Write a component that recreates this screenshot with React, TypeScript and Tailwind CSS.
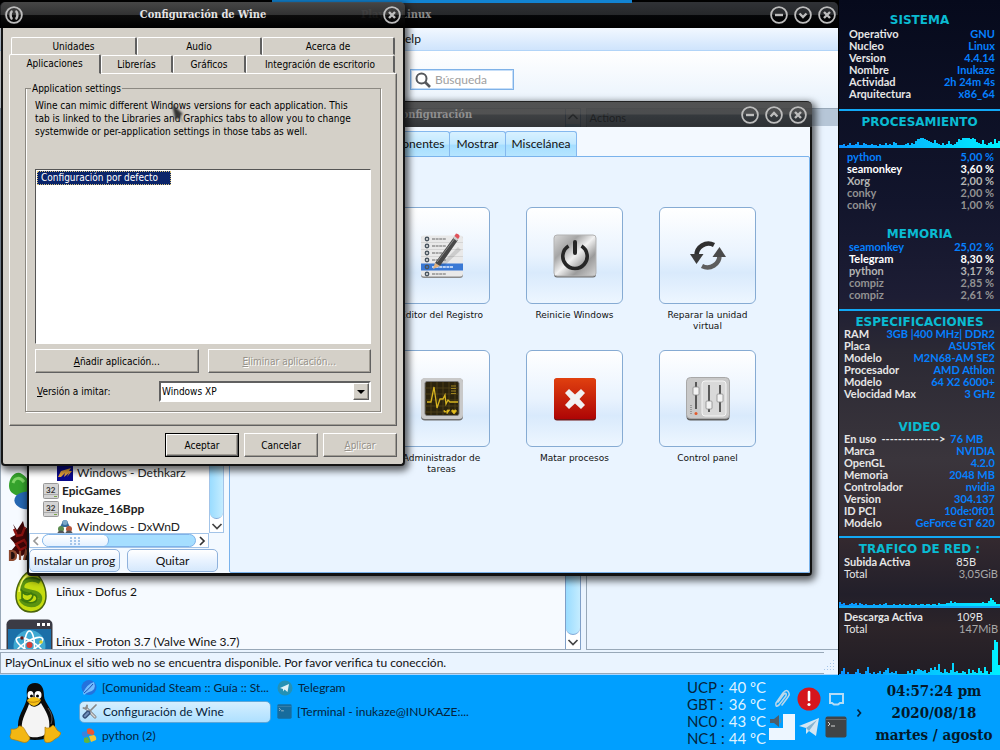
import React, { useState } from 'react';

type Row = { label: string; value: string; tone?: string; valueTone?: string };

const WHITE = 'text-[#e6e6e6]';
const BLUE = 'text-[#0580ff]';
const GREY = 'text-[#929292]';

const SYSTEM: Row[] = [
  { label: 'Operativo', value: 'GNU' },
  { label: 'Nucleo', value: 'Linux' },
  { label: 'Version', value: '4.4.14' },
  { label: 'Nombre', value: 'Inukaze' },
  { label: 'Actividad', value: '2h 24m 4s' },
  { label: 'Arquitectura', value: 'x86_64' },
];

const CPU: Row[] = [
  { label: 'python', value: '5,00 %', tone: BLUE, valueTone: BLUE },
  { label: 'seamonkey', value: '3,60 %', tone: 'text-white', valueTone: 'text-white' },
  { label: 'Xorg', value: '2,00 %', tone: 'text-[#b4b4b4]', valueTone: 'text-[#b4b4b4]' },
  { label: 'conky', value: '2,00 %', tone: GREY, valueTone: GREY },
  { label: 'conky', value: '1,00 %', tone: GREY, valueTone: GREY },
];

const MEMORY: Row[] = [
  { label: 'seamonkey', value: '25,02 %', tone: BLUE, valueTone: BLUE },
  { label: 'Telegram', value: '8,30 %', tone: 'text-white', valueTone: 'text-white' },
  { label: 'python', value: '3,17 %', tone: 'text-[#b4b4b4]', valueTone: 'text-[#b4b4b4]' },
  { label: 'compiz', value: '2,85 %', tone: GREY, valueTone: GREY },
  { label: 'compiz', value: '2,61 %', tone: GREY, valueTone: GREY },
];

const SPECS: Row[] = [
  { label: 'RAM', value: '3GB |400 MHz| DDR2' },
  { label: 'Placa', value: 'ASUSTeK' },
  { label: 'Modelo', value: 'M2N68-AM SE2' },
  { label: 'Procesador', value: 'AMD Athlon' },
  { label: 'Modelo', value: '64 X2 6000+' },
  { label: 'Velocidad Max', value: '3 GHz' },
];

const VIDEO: Row[] = [
  { label: 'Marca', value: 'NVIDIA' },
  { label: 'OpenGL', value: '4.2.0' },
  { label: 'Memoria', value: '2048 MB' },
  { label: 'Controlador', value: 'nvidia' },
  { label: 'Version', value: '304.137' },
  { label: 'ID PCI', value: '10de:0f01' },
  { label: 'Modelo', value: 'GeForce GT 620' },
];

const CPU_LOAD = [3, 3, 4, 2, 3, 5, 3, 3, 4, 6, 3, 3, 5, 4, 3, 3, 4, 3, 3, 2, 4, 3, 3, 5, 3, 4, 3, 6, 5, 3, 3, 3, 3, 4, 5, 3, 5, 4, 7, 9, 10, 10, 9, 8, 7, 6, 5, 8, 5, 4, 3, 5, 3, 4, 7, 4, 3, 4, 6, 9, 8, 10, 10, 10, 10, 9, 10, 9, 6, 5, 4, 8, 4, 3, 5, 6, 4, 9, 5, 7];
const UPLOAD = [4, 2, 3, 1, 1, 2, 3, 2, 3, 1, 3, 2, 1, 2, 1, 1, 1, 2, 1, 1, 2, 1, 2, 3, 1, 1, 1, 2, 1, 1, 2, 1, 2, 1, 1, 2, 1, 1, 2, 1, 2, 2, 1, 2, 2, 1, 2, 2, 1, 3, 2, 2, 2, 3, 3, 5, 3, 4, 3, 3, 3, 3, 3, 3, 3, 3, 3, 3, 3, 3, 3, 4, 3, 3, 5, 8, 6, 4, 2, 2];
const DOWNLOAD = [1, 4, 7, 1, 3, 1, 1, 1, 3, 6, 2, 1, 1, 4, 8, 2, 1, 3, 1, 2, 4, 1, 3, 5, 7, 2, 3, 2, 4, 1, 1, 1, 1, 1, 4, 2, 5, 1, 4, 6, 5, 4, 5, 2, 3, 7, 5, 8, 5, 11, 3, 2, 6, 3, 2, 5, 12, 3, 4, 2, 2, 4, 3, 1, 6, 2, 5, 3, 2, 7, 4, 2, 8, 4, 1, 3, 25, 35, 33, 10];

const TEMPS = [
  ['UCP', '40'],
  ['GBT', '36'],
  ['NC0', '43'],
  ['NC1', '44'],
];

/* ---------- desktop monitor ---------- */

const Heading = ({ children }: { children: React.ReactNode }) => (
  <h2 className="text-center font-['DejaVu_Sans',sans-serif] text-[12px] leading-[14px] font-bold text-[#0abbd2]">{children}</h2>
);

const Rows = ({ rows }: { rows: Row[] }) => (
  <dl>
    {rows.map((r, i) => (
      <div key={i} className="flex justify-between">
        <dt className={r.tone ?? WHITE}>{r.label}</dt>
        <dd className={r.valueTone ?? BLUE}>{r.value}</dd>
      </div>
    ))}
  </dl>
);

const Rule = () => <div className="h-[2px] bg-[#12a8f5]" />;

const Graph = ({ id, data, max, className }: { id: string; data: number[]; max: number; className: string }) => (
  <svg className={className} viewBox={`0 0 ${data.length * 2} ${max}`} preserveAspectRatio="none" shapeRendering="crispEdges">
    <defs>
      <linearGradient id={id} x1="0" x2={data.length * 2} y1="0" y2="0" gradientUnits="userSpaceOnUse">
        <stop offset="0" stopColor="#0a90ff" />
        <stop offset="1" stopColor="#00f0ff" />
      </linearGradient>
    </defs>
    {data.map((v, i) => (
      <rect key={i} x={i * 2} y={max - v} width={2} height={v} fill={`url(#${id})`} />
    ))}
  </svg>
);

const Monitor = () => (
  <aside className="flex w-[161px] shrink-0 flex-col bg-[linear-gradient(#060a1c,#12152c_30%,#1d1d34_44%,#2b2934_52%,#3a353c_68%,#33292f_80%,#221f2a_88%,#2c2429_93%,#211d25)] pt-[13px] text-[11px] leading-[12px] font-bold">
    <Heading>SISTEMA</Heading>
    <div className="pt-px pr-[5px] pl-[10px]"><Rows rows={SYSTEM} /></div>
    <div className="pt-[9px] pb-[4px]"><Rule /></div>
    <Heading>PROCESAMIENTO</Heading>
    <Graph id="cpu" data={CPU_LOAD} max={10} className="mt-[9px] block h-[10px] w-full" />
    <div className="pt-[3px] pr-[6px] pl-[8px]"><Rows rows={CPU} /></div>
    <div className="pt-[16px]"><Heading>MEMORIA</Heading></div>
    <div className="pr-[6px] pl-[10px]"><Rows rows={MEMORY} /></div>
    <div className="pt-[8px] pb-[4px]"><Rule /></div>
    <Heading>ESPECIFICACIONES</Heading>
    <div className="-mt-px pr-[5px] pl-[5px]"><Rows rows={SPECS} /></div>
    <div className="pt-[20px]"><Heading>VIDEO</Heading></div>
    <div className="-mt-px pr-[5px] pl-[5px]">
      <p className="flex gap-[5px]">
        <span className={WHITE}>En uso</span>
        <span className={WHITE}>--------------&gt;</span>
        <span className={BLUE}>76 MB</span>
      </p>
      <Rows rows={VIDEO} />
    </div>
    <div className="pt-[7px] pb-[4px]"><Rule /></div>
    <Heading>TRAFICO DE RED :</Heading>
    <div className="pr-[2px] pl-[5px]">
      <p className={`flex justify-between pr-[22px] ${WHITE}`}><span>Subida Activa</span><span className="font-normal">85B</span></p>
      <p className="flex justify-between font-normal text-[#a8a8a8]"><span className={WHITE}>Total</span><span>3,05GiB</span></p>
    </div>
    <Graph id="up" data={UPLOAD} max={8} className="mt-[18px] block h-[8px] w-full" />
    <Rule />
    <div className="pt-[3px] pr-[2px] pl-[5px]">
      <p className={`flex justify-between pr-[15px] ${WHITE}`}><span>Descarga Activa</span><span className="font-normal">109B</span></p>
      <p className="flex justify-between font-normal text-[#a8a8a8]"><span className={WHITE}>Total</span><span>147MiB</span></p>
    </div>
    <Graph id="down" data={DOWNLOAD} max={35} className="mt-auto block h-[35px] w-full" />
  </aside>
);

/* ---------- window chrome ---------- */

const SHAPES: Record<string, string> = {
  min: 'M5 9H13',
  down: 'M5.5 7.5L9 11L12.5 7.5',
  up: 'M5.5 10.5L9 7L12.5 10.5',
  close: 'M6 6L12 12M12 6L6 12',
  menu: 'M7.5 5C5 6 5 12 7.5 13M10.5 5C13 6 13 12 10.5 13',
};

const RoundButton = ({ shape, label }: { shape: keyof typeof SHAPES; label: string }) => (
  <button aria-label={label} className="size-[18px] shrink-0 text-[#bdbdbd]">
    <svg viewBox="0 0 18 18" className="size-full" fill="none" stroke="currentColor">
      <circle cx="9" cy="9" r="7.9" strokeWidth="1.8" />
      <path d={SHAPES[shape]} strokeWidth="2.4" />
    </svg>
  </button>
);

const TitleBar = ({ title, className, children }: { title: string; className: string; children: React.ReactNode }) => (
  <header className={`flex h-[26px] items-center gap-[6px] rounded-t-[5px] px-[4px] ${className}`}>
    <RoundButton shape="menu" label="Menú" />
    <h1 className="flex-1 text-center font-['DejaVu_Serif_Condensed','DejaVu_Serif',serif] text-[11px] leading-[16px] font-bold whitespace-nowrap">{title}</h1>
    {children}
  </header>
);

const Chevron = ({ d, className = 'size-[12px]' }: { d: string; className?: string }) => (
  <svg viewBox="0 0 12 12" className={className} fill="none" stroke="currentColor" strokeWidth="1.7"><path d={d} /></svg>
);

/* ---------- list icons ---------- */

const CloverIcon = () => (
  <svg viewBox="0 0 44 44" className="size-[44px]">
    <path d="M23 25C12 28 1 25 1 16C1 7 8 0 14 4C21 8 23 16 23 25Z" fill="#35a22c" />
    <path d="M5 13C7 7 12 7 16 12" stroke="#7fd567" strokeWidth="3" fill="none" />
    <path d="M25 22C13 20 4 26 7 33C10 39 21 42 26 36Z" fill="#2567b1" />
  </svg>
);

const DemonIcon = () => (
  <svg viewBox="0 0 44 44" className="size-[44px]">
    <path d="M5 4L9 10L15 1L17 9L24 4L22 30L14 36L3 31L8 25L2 18L9 14Z" fill="#3d0708" />
    <path d="M6 9L9 16L14 15L17 7M8 24L16 20L20 26L12 30Z" stroke="#8d1310" strokeWidth="2.4" fill="none" />
    <path d="M2 31V40H5C9 39 9 32 5 31ZM12 31V40M16 40L18 31L22 40" stroke="#8d4a30" strokeWidth="2.2" fill="#23100d" />
  </svg>
);

const DofusIcon = () => (
  <svg viewBox="0 0 44 44" className="size-[44px]">
    <path d="M22 1C31 3 37 16 37 26C37 35 31 42 22 42S7 35 7 26C7 16 13 3 22 1Z" fill="#c5dc10" stroke="#4a640c" strokeWidth="1.5" />
    <path d="M31 12C24 7 13 10 13 17C13 24 32 19 31 29C30 37 15 37 12 29" fill="none" stroke="#5b9310" strokeWidth="4.500" />
    <path d="M31 10C23 5 11 9 11 17C11 26 29 21 28 29C27 34 17 34 12 29M22 23C19 26 16 25 13 22V28C17 33 23 31 24 25Z" fill="none" stroke="#3c780c" strokeWidth="1.6" />
    <path d="M10 22C11 12 16 6 21 4" fill="none" stroke="#f4f871" strokeWidth="1.600" />
  </svg>
);

const ProtonIcon = () => (
  <svg viewBox="0 0 47 47" className="h-[47px] w-[47px]">
    <rect x=".5" y=".5" width="46" height="46" rx="5" fill="#3b3b45" />
    <path d="M31 4h3v3h-3zM36 4h3v3h-3zM41 4h3v3h-3z" fill="#fff" />
    <path d="M2 10H45V45H2Z" fill="#1b6fa8" />
    <circle cx="23.500" cy="27" r="16" fill="#3fa9d2" />
    <g fill="none" stroke="#fff" strokeWidth="1.6">
      <ellipse cx="23.5" cy="27" rx="5" ry="15" />
      <ellipse cx="23.5" cy="27" rx="5" ry="15" transform="rotate(60 23.5 27)" />
      <ellipse cx="23.5" cy="27" rx="5" ry="15" transform="rotate(120 23.5 27)" />
    </g>
    <circle cx="23.500" cy="26" r="3" fill="#dc3b35" />
    <circle cx="16" cy="19" r="1.8" fill="#5e1717" />
    <circle cx="35" cy="23" r="1.800" fill="#d5cf2e" />
  </svg>
);

const DriveIcon = () => (
  <svg viewBox="0 0 16 16" className="size-[16px] shrink-0">
    <rect x=".5" y=".5" width="15" height="15" rx="1" fill="#d4d4d4" stroke="#999" />
    <path d="M1 11.500H15" stroke="#aaa" />
    <path d="M11 13.500h3" stroke="#7aa64b" />
    <text x="3" y="9.500" fontSize="8" fontFamily="Lato" fontWeight="bold" fill="#333">32</text>
  </svg>
);

const DethIcon = () => (
  <svg viewBox="0 0 16 16" className="size-[16px] shrink-0">
    <path d="M0 0H16V16H0Z" fill="#0a0a8c" />
    <path d="M1 12L4 6L14 3L12 6L15 6L10 12L12 8L7 12L8 8L4 12Z" fill="#e9a53b" />
  </svg>
);

const CubesIcon = () => (
  <svg viewBox="0 0 16 16" className="size-[16px] shrink-0">
    <path d="M5 4C5 0 11 0 11 4L13 8H3Z" fill="#386c9b" />
    <circle cx="8" cy="3.500" r="2.500" fill="#7aa8c9" />
    <circle cx="4" cy="10" r="3" fill="#5b8c4e" />
    <circle cx="12" cy="10" r="3" fill="#b4563c" />
    <path d="M0 16C0 10 8 10 8 16ZM8 16C8 10 16 10 16 16Z" fill="#555" />
  </svg>
);

/* ---------- tile icons ---------- */

const RegistryIcon = () => (
  <svg viewBox="0 0 44 46" className="h-[46px] w-[44px]">
    <rect x="1" y="3" width="42" height="42" rx="3" fill="#8b8b8b" />
    <rect x="1" y="2.500" width="42" height="41" rx="3" fill="#e9e9e9" />
    <path d="M1 30.500H43V37.500H1Z" fill="#3a79d5" />
    <path d="M1 9.500H43M1 16.500H43M1 23.500H43" stroke="#cfcfcf" strokeWidth=".8" />
    {[6, 13, 20, 27, 34, 41].map((y) => (
      <g key={y}>
        <circle cx="7" cy={y} r="1.700" fill="none" stroke="#4a5660" strokeWidth="1.4" />
        <path d={`M12 ${y}H${y === 34 ? 33 : 26}`} stroke={y === 34 ? '#b9d1f4' : '#a7a7a7'} strokeWidth="1.8" strokeDasharray="3 .6" />
      </g>
    ))}
    <path d="M20 32L38 14L41 17L24 33Z" fill="#000" opacity=".12" />
    <path d="M15 30L34 4L38 7L20 33Z" fill="#484848" />
    <path d="M17 29L35 5" stroke="#8b8b8b" strokeWidth="1" />
    <path d="M15 30L20 33L13 36Z" fill="#e3b27c" />
    <path d="M33 5L35 2L39 5L37 8Z" fill="#cfcfcf" />
    <path d="M34.500 3L36 0.500Q40 1 39.500 4L38 6Z" fill="#e0525a" />
  </svg>
);

const PowerIcon = () => (
  <svg viewBox="0 0 44 44" className="size-[44px]">
    <defs>
      <linearGradient id="metal" x1="0" y1="0" x2="1" y2="1">
        <stop offset="0" stopColor="#d9d9d9" /><stop offset=".3" stopColor="#a5a5a5" /><stop offset=".5" stopColor="#f1f1f1" />
        <stop offset=".72" stopColor="#9b9b9b" /><stop offset="1" stopColor="#d5d5d5" />
      </linearGradient>
    </defs>
    <rect x="1" y="1.500" width="42" height="42" rx="3" fill="#6d6d6d" />
    <rect x="1" y="1" width="42" height="41" rx="3" fill="url(#metal)" stroke="#b3b3b3" />
    <path d="M15.500 12A12.200 12.200 0 1 0 28.500 12" fill="none" stroke="#262626" strokeWidth="3.600" />
    <path d="M22 8V19" stroke="#262626" strokeWidth="4" strokeLinecap="round" />
  </svg>
);

const RefreshIcon = () => (
  <svg viewBox="0 0 44 44" className="size-[44px]">
    <path d="M10.500 22A12 12 0 0 1 28 11" fill="none" stroke="#303030" strokeWidth="4.500" />
    <path d="M33.500 21A12 12 0 0 1 16 32" fill="none" stroke="#5e5e5e" strokeWidth="4.500" />
    <path d="M4 20H17.500L10.500 30Z" fill="#3c3c3c" />
    <path d="M26.500 23H40L33.500 13Z" fill="#4a4a4a" />
  </svg>
);

const PulseIcon = () => (
  <svg viewBox="0 0 44 44" className="size-[44px]">
    <rect x="1" y="1.500" width="42" height="42" rx="4" fill="#6f6f6f" />
    <rect x="1" y="1" width="42" height="41" rx="4" fill="#c9c9c9" />
    <rect x="5" y="4.500" width="34" height="34" rx="2" fill="#2b230d" stroke="#777" />
    <path d="M11 5V38M17 5V38M23 5V38M29 5V38M35 5V38M5 11H39M5 17H39M5 23H39M5 29H39M5 35H39" stroke="#57491b" strokeWidth=".7" />
    <path d="M7 25H11L14 10L17 31L20 22H23L25 18L26 27L28 23L30 25H38" fill="none" stroke="#d8b520" strokeWidth="1.300" />
    <path d="M31 9H36M31 11.500H36M31 14H36M31 16.500H36" stroke="#9f8420" strokeWidth="1.200" />
    <path d="M24 33V35H27M30 33H27V37M34 37L31.500 34Q32 32 34 33.500Q36 32 36.500 34Z" stroke="#d4b020" fill="#e8c21d" strokeWidth=".8" />
  </svg>
);

const KillIcon = () => (
  <svg viewBox="0 0 44 44" className="size-[44px]">
    <defs><linearGradient id="red" x1="0" y1="0" x2="0" y2="1"><stop offset="0" stopColor="#e0400f" /><stop offset="1" stopColor="#ae0505" /></linearGradient></defs>
    <rect x="1" y="1.500" width="42" height="42" rx="3" fill="#701515" />
    <rect x="1" y="1" width="42" height="41" rx="3" fill="url(#red)" />
    <path d="M12 16L16 12L22 17.500L28 12L32 16L26.500 22L32 28L28 32L22 26.500L16 32L12 28L17.500 22Z" fill="#f1f1f1" />
  </svg>
);

const MixerIcon = () => (
  <svg viewBox="0 0 44 44" className="size-[44px]">
    <rect x=".5" y="1.500" width="43" height="42" rx="4" fill="#5f5f5f" />
    <rect x=".5" y=".5" width="43" height="41" rx="4" fill="#c9c9c9" stroke="#a8a8a8" />
    <rect x="16" y="4" width="24" height="35" rx="3" fill="#d9d9d9" stroke="#f5f5f5" />
    <path d="M10 5V32M23 8V35M34 8V35" stroke="#3b3b3b" strokeWidth="1.600" />
    <g fill="#f2f2f2" stroke="#8a8a8a" strokeWidth=".8">
      <rect x="7" y="10" width="6" height="8" rx="1" />
      <rect x="20" y="24" width="6" height="8" rx="1" />
      <rect x="31" y="17" width="6" height="8" rx="1" />
    </g>
    <path d="M5 37V28" stroke="#999" strokeDasharray="1 1" strokeWidth="2" />
    <circle cx="10" cy="36.500" r="1.500" fill="#e25a2c" />
  </svg>
);

/* ---------- PlayOnLinux main window ---------- */

const MainWindow = () => (
  <section className="flex min-w-0 flex-1 flex-col bg-black pt-[2px] pr-px">
    <TitleBar title="PlayOnLinux" className="bg-[linear-gradient(#303236,#26282b_48%,#050608_52%,#000)] pr-[2px] text-[#8b8b8b]">
      <RoundButton shape="min" label="Minimizar" />
      <RoundButton shape="down" label="Restaurar" />
      <RoundButton shape="close" label="Cerrar" />
    </TitleBar>
    <nav className="flex h-[23px] items-center border-b border-[#b1d4f8] bg-[linear-gradient(#f2f8ff,#cfe4fc)] pl-[396px]">
      <button className="text-[12px]">Help</button>
    </nav>
    <div className="h-[57px] bg-[linear-gradient(#fff,#e8f2fc)] pt-[18px] pl-[410px]">
      <label className="flex h-[21px] w-[104px] items-center border border-[#7fb2e8] bg-white pl-[4px] shadow-[inset_0_0_0_1px_#c6def8]">
        <svg viewBox="0 0 16 16" className="size-[16px] shrink-0" fill="none" stroke="#55585c" strokeWidth="2">
          <circle cx="6.500" cy="6.500" r="5" /><path d="M10 10L15 15" strokeWidth="2.600" />
        </svg>
        <input aria-label="Búsqueda" placeholder="Búsqueda" className="w-full min-w-0 pl-[4px] text-[12px] outline-none placeholder:text-[#a0a0a0]" />
      </label>
    </div>
    <div className="flex min-h-0 flex-1 bg-[#eaf4ff]">
      <div className="flex h-full min-w-0 flex-[581] border-y border-l border-[#98a8b8] bg-[#f6faff]">
        <ul className="flex min-w-0 flex-1 flex-col justify-end overflow-hidden text-[12px]">
          <li className="flex h-[50px] shrink-0 items-center pl-[7px]"><CloverIcon /></li>
          <li className="flex h-[50px] shrink-0 items-center pl-[7px]"><DemonIcon /></li>
          <li className="flex h-[50px] shrink-0 items-center gap-[3px] pl-[8px]"><DofusIcon />Liñux - Dofus 2</li>
          <li className="-mb-[18px] flex h-[50px] shrink-0 items-center gap-[3px] pl-[5px]"><ProtonIcon />Liñux - Proton 3.7 (Valve Wine 3.7)</li>
        </ul>
        <div className="flex w-[16px] flex-col items-center border-x border-[#7f9fc8] bg-white text-[#444]">
          <span className="flex h-[15px] items-center"><Chevron d="M1.500 8L6 3.500L10.500 8" /></span>
          <span className="w-full flex-1 rounded-b-[8px] border-b border-[#7fa8d8] bg-[linear-gradient(90deg,#9adcff,#c4ecff)]" />
          <span className="flex h-[14px] items-center"><Chevron d="M1.500 4L6 8.500L10.500 4" /></span>
        </div>
      </div>
      <div className="ml-[5px] min-w-0 flex-[252] border border-r-0 border-[#98a8b8]">
        <p className="h-[17px] bg-[#b6c6d7] pl-[3px] text-[11px] leading-[17px]">Actions</p>
      </div>
    </div>
    <footer className="flex h-[25px] items-end justify-between border-b border-[#a8d5ff] bg-[#eaf4ff] pt-[2px]">
      <p className="flex-1 self-stretch border border-r-0 border-[#98a8b8] pl-[4px] text-[12px] leading-[20px]">PlayOnLinux el sitio web no se encuentra disponible. Por favor verifica tu conección.</p>
      <svg viewBox="0 0 12 12" className="mr-[2px] mb-[2px] size-[12px]" fill="#a6c6ea">
        <path d="M9 0h1v1h-1zM9 3h1v1h-1zM6 3h1v1h-1zM9 6h1v1h-1zM6 6h1v1h-1zM3 6h1v1h-1zM9 9h1v1h-1zM6 9h1v1h-1zM3 9h1v1h-1zM0 9h1v1h-1z" />
      </svg>
    </footer>
  </section>
);

/* ---------- PlayOnLinux settings window ---------- */

const TILES = [
  { name: 'Editor del Registro', icon: <RegistryIcon /> },
  { name: 'Reinicie Windows', icon: <PowerIcon /> },
  { name: 'Reparar la unidad virtual', icon: <RefreshIcon /> },
  { name: 'Administrador de tareas', icon: <PulseIcon /> },
  { name: 'Matar procesos', icon: <KillIcon /> },
  { name: 'Control panel', icon: <MixerIcon /> },
];

const blueTab = 'h-[25px] rounded-t-[3px] border border-b-0 border-[#84b8ee] bg-[linear-gradient(#d8f1ff,#c0e8ff_50%,#a5deff_55%,#b6e5ff)] text-[12px]';
const softButton = 'h-[23px] w-[91px] overflow-hidden rounded-[5px] border border-[#8fb2dc] bg-[linear-gradient(#fff,#e9f3ff_50%,#d5e8fc)] text-[12px] whitespace-nowrap';

const ConfigWindow = () => (
  <section className="absolute top-[101px] right-[27px] bottom-[99px] left-[27px] flex flex-col rounded-[5px] shadow-[2px_3px_7px_2px_rgba(0,0,0,0.6)]">
    <TitleBar title="Configuración" className="border-t border-[#222] bg-[linear-gradient(rgba(72,72,72,0.94),rgba(64,64,64,0.9)_48%,rgba(32,34,36,0.86)_52%,rgba(30,32,34,0.9))] pr-[5px] text-[#8f8f8f] [&>h1]:pl-[76px]">
      <RoundButton shape="min" label="Minimizar" />
      <RoundButton shape="up" label="Maximizar" />
      <RoundButton shape="close" label="Cerrar" />
    </TitleBar>
    <div className="flex min-h-0 flex-1 rounded-b-[4px] border-x-2 border-b-[3px] border-[#111] bg-[#f3f9ff]">
      <div className="flex w-[195px] shrink-0 flex-col">
        <div className="flex min-h-0 flex-1">
          <ul className="flex min-w-0 flex-1 flex-col justify-end overflow-hidden bg-white text-[12px] leading-[12px] text-[#222]">
            <li className="flex h-[18px] shrink-0 items-center gap-[4px] pl-[28px]"><DethIcon />Windows - Dethkarz</li>
            <li className="flex h-[18px] shrink-0 items-center gap-[3px] pl-[14px] font-bold"><DriveIcon />EpicGames</li>
            <li className="flex h-[18px] shrink-0 items-center gap-[3px] pl-[14px] font-bold"><DriveIcon />Inukaze_16Bpp</li>
            <li className="-mb-[3px] flex h-[18px] shrink-0 items-center gap-[4px] pl-[28px]"><CubesIcon />Windows - DxWnD</li>
          </ul>
          <div className="flex w-[15px] flex-col items-center border border-[#a3c4e8] bg-white text-[#444]">
            <span className="w-full flex-1 rounded-b-[7px] border-b border-[#7fa8d8] bg-[linear-gradient(90deg,#9adcff,#c4ecff)]" />
            <span className="flex h-[13px] items-center"><Chevron d="M1.500 4L6 8.500L10.500 4" /></span>
          </div>
        </div>
        <div className="flex h-[15px] w-[180px] items-center border border-[#a3c4e8] bg-white">
          <span className="text-[#999]"><Chevron d="M8 2L4 6L8 10" /></span>
          <span className="flex h-full flex-1 rounded-[7px] border border-[#7fb2e8] bg-[#a5deff]">
            <span className="flex w-[66px] items-center justify-center rounded-[7px] border-r border-[#7fb2e8] bg-[linear-gradient(#fff,#e4f1ff)]">
              <svg viewBox="0 0 11 8" className="h-[8px] w-[11px]" fill="#a6c6ea"><path d="M0 0h2v2H0zM4 0h2v2H4zM8 0h2v2H8zM0 3h2v2H0zM4 3h2v2H4zM8 3h2v2H8zM0 6h2v2H0zM4 6h2v2H4zM8 6h2v2H8z" /></svg>
            </span>
          </span>
          <span className="text-[#333]"><Chevron d="M4 2L8 6L4 10" /></span>
        </div>
        <div className="flex gap-[7px] py-px">
          <button className={softButton}>Instalar un prog</button>
          <button className={softButton}>Quitar</button>
        </div>
      </div>
      <div className="ml-[5px] flex min-w-0 flex-1 flex-col pt-[4px]">
        <div role="tablist" className="flex pl-[141px]">
          <button role="tab" className={`${blueTab} w-[80px] pr-[6px] text-right`}>Componentes</button>
          <button role="tab" className={`${blueTab} -ml-px w-[57px]`}>Mostrar</button>
          <button role="tab" className={`${blueTab} -ml-px w-[72px]`}>Miscelánea</button>
        </div>
        <div className="flex-1 rounded-[2px] border border-[#7ab3ec] bg-[#eaf4ff] pt-[50px] pl-[145px]">
          <ul className="grid w-[399px] grid-cols-3 gap-y-[12px]">
            {TILES.map((t) => (
              <li key={t.name} className="flex h-[131px] flex-col items-center gap-[6px]">
                <button aria-label={t.name} className="flex size-[97px] shrink-0 items-center justify-center rounded-[6px] border border-[#86abd3] bg-[linear-gradient(#fff,#e9f3fe_50%,#d9eafc_68%,#edf6ff)]">{t.icon}</button>
                <span className="max-w-[92px] text-center font-['DejaVu_Sans',sans-serif] text-[9px] leading-[11px]">{t.name}</span>
              </li>
            ))}
          </ul>
        </div>
      </div>
    </div>
  </section>
);

/* ---------- Wine configuration window ---------- */

const raised = 'border border-t-white border-r-[#606060] border-b-[#606060] border-l-white shadow-[inset_-1px_-1px_0_#a09c94]';
const wineButton = `h-[24px] bg-[#d4d0c8] ${raised}`;
const disabled = 'text-[#96928a] [text-shadow:1px_1px_0_#fff]';
const wineTab = 'rounded-t-[2px] border border-t-white border-r-[#606060] border-b-transparent border-l-white border-r-2 h-[18px]';

const WineWindow = () => {
  const [version, setVersion] = useState('Windows XP');
  const [tab, setTab] = useState('Aplicaciones');
  const tabClass = (name: string, width: string) =>
    `${wineTab} ${width} ${tab === name ? 'relative -mt-px -mb-px h-[20px] bg-[#d4d0c8] pb-[2px]' : ''}`;

  return (
    <section className="absolute top-[2px] left-[1px] w-[404px] rounded-[5px] text-black shadow-[2px_3px_7px_2px_rgba(0,0,0,0.6)]">
      <TitleBar title="Configuración de Wine" className="bg-[linear-gradient(rgba(72,72,72,0.92),rgba(52,52,52,0.9)_48%,rgba(12,12,12,0.92)_52%,rgba(0,0,0,0.94))] text-[#e4e4e4]">
        <RoundButton shape="close" label="Cerrar" />
      </TitleBar>
      <div className="rounded-b-[4px] border-x-2 border-b-2 border-[#151515] bg-[#d4d0c8] px-[6px] pt-[9px] pb-[7px] font-['DejaVu_Sans_Condensed','DejaVu_Sans',sans-serif] text-[10px] leading-[13px]">
        <div role="tablist">
          <div className="flex pr-[2px] pl-[2px]">
            <button role="tab" aria-selected={tab === 'Unidades'} onClick={() => setTab('Unidades')} className={tabClass('Unidades', 'w-[126px]')}>Unidades</button>
            <button role="tab" aria-selected={tab === 'Audio'} onClick={() => setTab('Audio')} className={tabClass('Audio', 'w-[125px]')}>Audio</button>
            <button role="tab" aria-selected={tab === 'Acerca de'} onClick={() => setTab('Acerca de')} className={tabClass('Acerca de', 'flex-1')}>Acerca de</button>
          </div>
          <div className="flex pr-[2px]">
            <button role="tab" aria-selected={tab === 'Aplicaciones'} onClick={() => setTab('Aplicaciones')} className={tabClass('Aplicaciones', 'w-[92px]')}>Aplicaciones</button>
            <button role="tab" aria-selected={tab === 'Librerías'} onClick={() => setTab('Librerías')} className={tabClass('Librerías', 'w-[72px]')}>Librerías</button>
            <button role="tab" aria-selected={tab === 'Gráficos'} onClick={() => setTab('Gráficos')} className={tabClass('Gráficos', 'w-[73px]')}>Gráficos</button>
            <button role="tab" aria-selected={tab === 'Integración'} onClick={() => setTab('Integración')} className={tabClass('Integración', 'flex-1')}>Integración de escritorio</button>
          </div>
        </div>
        <div className={`px-[15px] pt-[8px] pb-[13px] ${raised}`}>
          <fieldset className="border border-[#8c8982] px-[9px] pb-[9px] shadow-[1px_1px_0_#fff,inset_1px_0_0_#fff]">
            <legend className="-ml-[4px] px-px">Application settings</legend>
            <p className="pt-[4px]">
              Wine can mimic different Windows versions for each application. This<br />
              tab is linked to the Libraries and Graphics tabs to allow you to change<br />
              systemwide or per-application settings in those tabs as well.
            </p>
            <ul className="mt-[31px] h-[175px] border border-t-[#555] border-r-white border-b-white border-l-[#555] bg-white p-px">
              <li className="h-[14px] w-[134px] border border-dotted border-[#d8c27a] bg-[#0a246a] pl-[3px] leading-[12px] text-white">Configuración por defecto</li>
            </ul>
            <div className="mt-[5px] grid grid-cols-2 gap-[9px]">
              <button className={wineButton}><u>A</u>ñadir aplicación...</button>
              <button className={`${wineButton} ${disabled}`} disabled><u>E</u>liminar aplicación...</button>
            </div>
            <div className="mt-[8px] flex items-center pl-[2px]">
              <label htmlFor="version" className="w-[122px]"><u>V</u>ersión a imitar:</label>
              <div className="relative flex-1">
                <select id="version" value={version} onChange={(e) => setVersion(e.target.value)} className="block h-[21px] w-full appearance-none border-2 border-t-[#606060] border-r-white border-b-white border-l-[#606060] bg-white pl-px">
                  <option>Windows XP</option>
                </select>
                <span className={`pointer-events-none absolute top-[2px] right-[2px] flex h-[17px] w-[16px] items-center justify-center bg-[#d4d0c8] ${raised}`}>
                  <svg viewBox="0 0 8 4" className="h-[4px] w-[8px]"><path d="M0 0H8L4 4Z" /></svg>
                </span>
              </div>
            </div>
          </fieldset>
        </div>
        <div className="mt-[7px] flex justify-end gap-[5px]">
          <button className="w-[74px] border border-black"><span className={`flex h-[22px] items-center justify-center ${raised}`}>Aceptar</span></button>
          <button className={`${wineButton} w-[74px]`}>Cancelar</button>
          <button className={`${wineButton} ${disabled} w-[74px]`} disabled><u>A</u>plicar</button>
        </div>
      </div>
      <svg viewBox="0 0 16 26" className="absolute top-[99px] left-[168px] h-[26px] w-[16px] blur-[1px]"><path d="M3 3L14 13L11 15L15 23L11 17L6 18Z" fill="#333" /></svg>
    </section>
  );
};

/* ---------- panel ---------- */

const Tux = () => (
  <svg viewBox="0 0 52 62" className="h-[62px] w-[52px]">
    <path d="M26 1C33 1 35 7 35 14C35 21 46 29 46 43C46 54 38 58 26 58S9 54 9 43C9 32 18 23 18 14C17 6 19 1 26 1Z" fill="#0b0b0b" />
    <path d="M20 22Q25 28 32 21C36 28 42 36 40 47C38 57 18 58 14 50C10 41 17 31 20 22Z" fill="#f4f4f4" />
    <ellipse cx="21.500" cy="13" rx="3" ry="4" fill="#fff" /><ellipse cx="29" cy="13" rx="3.500" ry="4" fill="#fff" />
    <circle cx="22.500" cy="14" r="1.500" /><circle cx="28.500" cy="14" r="1.500" />
    <path d="M18 18Q25 12 32 18Q30 23 25 24Q20 23 18 18Z" fill="#f6c014" />
    <path d="M18 19Q25 22 32 18" stroke="#a96f09" strokeWidth=".8" fill="none" />
    <path d="M2 47Q8 48 10 44Q14 43 17 50L21 56Q19 62 13 60Q7 58 2 57Q0 55 2 51Z" fill="#f3b713" stroke="#ae7a0b" strokeWidth=".7" />
    <path d="M36 45Q39 48 44 43Q47 45 48 48L52 51Q51 55 46 57Q41 62 36 60Q34 57 36 51Z" fill="#f3b713" stroke="#ae7a0b" strokeWidth=".7" />
    <path d="M39 26Q45 34 42 42" stroke="#555" fill="none" />
  </svg>
);

const BirdIcon = () => (
  <svg viewBox="0 0 16 16" className="size-[16px] shrink-0"><circle cx="8" cy="7.500" r="7.500" fill="#2472dd" /><path d="M2 13Q6 4 13 2Q16 10 8 12Q5 13 3 15Z" fill="#72bdff" /><path d="M3 13Q8 9 12 4" stroke="#1c50b2" fill="none" /></svg>
);

const ToolsIcon = () => (
  <svg viewBox="0 0 16 16" className="size-[16px] shrink-0" fill="none" strokeLinecap="round">
    <path d="M4 4L13 13" stroke="#777" strokeWidth="3" /><path d="M4 4L13 13" stroke="#d7d7d7" strokeWidth="1.500" />
    <path d="M1.500 4Q5 6 5 1.500" stroke="#8d8d8d" strokeWidth="2" />
    <path d="M14 1L7 8" stroke="#888" strokeWidth="1.700" /><path d="M6 9L3 12" stroke="#39547d" strokeWidth="5" /><path d="M6 9L3 12" stroke="#7191bd" strokeWidth="2" />
  </svg>
);

const WindowsIcon = () => (
  <svg viewBox="0 0 16 16" className="size-[16px] shrink-0">
    <path d="M6 1Q10 -1 13 3Q14 6 12 7L6 6Z" fill="#ea5933" /><path d="M1 4L6 3L7 8L3 9Q0 8 1 4Z" fill="#3b83dc" />
    <path d="M8 8L13 7Q16 9 15 12L10 14Z" fill="#f4c631" /><path d="M3 10L7 9L9 14Q6 16 3 14Z" fill="#62b53b" />
  </svg>
);

const TelegramIcon = () => (
  <svg viewBox="0 0 16 16" className="size-[16px] shrink-0"><circle cx="8" cy="8" r="7.500" fill="#2491b5" /><path d="M3 8L12 4L10.500 12L7.500 9.500L6 11.500V9Z" fill="#dff2f8" /></svg>
);

const TerminalIcon = ({ className, fill }: { className: string; fill: string }) => (
  <svg viewBox="0 0 22 22" className={className}><rect x=".5" y=".5" width="21" height="21" rx="2" fill={fill} /><path d="M1 3.500H21" stroke="#fff" opacity=".2" /><path d="M3 6L5 8L3 10M6 10H10" fill="none" stroke="#e5e5e5" strokeWidth=".9" /></svg>
);

const task = 'flex h-[22px] items-center gap-[5px] pl-[2px] text-left text-[12px] whitespace-nowrap text-[#05233c]';

const Panel = () => (
  <footer className="flex h-[75px] shrink-0 items-center bg-[#009fff] pr-[2px] pl-[9px]">
    <button aria-label="Inicio"><Tux /></button>
    <div className="ml-[18px] grid w-[392px] shrink-0 grid-flow-col grid-cols-[192px_1fr] grid-rows-3 gap-x-[4px] gap-y-[2px] pb-[2px]">
      <button className={task}><BirdIcon />[Comunidad Steam :: Guía :: St...</button>
      <button className={`${task} rounded-[5px] border border-[#5da7d8] bg-[linear-gradient(#d5efff,#aee0ff)]`}><ToolsIcon />Configuración de Wine</button>
      <button className={task}><WindowsIcon />python (2)</button>
      <button className={task}><TelegramIcon />Telegram</button>
      <button className={task}><TerminalIcon className="size-[15px] shrink-0" fill="#176c9d" />[Terminal - inukaze@INUKAZE:...</button>
    </div>
    <ul className="ml-auto shrink-0 text-[15px] leading-[17px] whitespace-pre">
      {TEMPS.map(([name, value]) => (
        <li key={name} className="flex justify-between gap-[4px]"><span className="text-[#06243b]">{name} :</span><span className="text-[#dff2ff]">{value} ºC</span></li>
      ))}
    </ul>
    <div className="ml-[3px] grid shrink-0 grid-cols-3 items-center justify-items-center gap-x-[1px] gap-y-[2px]">
      <svg viewBox="0 0 26 26" className="size-[26px]" fill="none" stroke="#b9d7ea" strokeWidth="1.600" strokeLinecap="round"><path d="M9 16L15 8Q18 6 17 10L10 19Q6 22 7 17L14 7Q18 2 20 7Q21 9 19 11L13 19" /></svg>
      <svg viewBox="0 0 26 26" className="size-[26px]"><circle cx="13" cy="13" r="11.500" fill="#d5161d" /><path d="M13 6V14" stroke="#fff" strokeWidth="2.600" strokeLinecap="round" /><circle cx="13" cy="18.500" r="1.600" fill="#fff" /></svg>
      <svg viewBox="0 0 26 26" className="size-[26px]" fill="none" stroke="#b4dcf6" strokeWidth="2"><path d="M7 8H20V17H17L15 18.500H11L9 17H7Z" /></svg>
      <svg viewBox="0 0 26 26" className="size-[26px]"><path d="M14 0H26V26H0V14H14Z" fill="#edf6ff" /><path d="M1 5H5L10 1V13L5 9H1Z" fill="#4e5d69" /><path d="M11 5Q13 7 11 9" stroke="#71889a" fill="none" /></svg>
      <svg viewBox="0 0 26 26" className="size-[26px]"><path d="M3 12L23 4L20 22L13 17L10 20V14Z" fill="#d3e6f3" /><path d="M10 14L21 6L13 17Z" fill="#83b4d2" /></svg>
      <TerminalIcon className="size-[22px]" fill="#414446" />
    </div>
    <button aria-label="Mostrar más" className="ml-[4px] text-[#06243b]"><Chevron d="M4.500 2.500L7.500 6L4.500 9.500" /></button>
    <time className="ml-[5px] w-[128px] shrink-0 text-center font-['DejaVu_Serif_Condensed','DejaVu_Serif',serif] text-[15px] leading-[22px] font-bold whitespace-nowrap text-[#04192a]">
      04:57:24 pm<br />2020/08/18<br />martes / agosto
    </time>
  </footer>
);

const App: React.FC = () => (
  <div className="flex min-h-screen flex-col overflow-hidden bg-black font-['Lato',sans-serif] text-[#111]">
    <div className="flex flex-1">
      <main className="relative flex min-w-0 flex-1">
        <MainWindow />
        <ConfigWindow />
        <div className="absolute top-0 left-[272px] h-[3px] w-[360px] bg-[#1283d2]" />
        <WineWindow />
      </main>
      <Monitor />
    </div>
    <Panel />
  </div>
);

export default App;
